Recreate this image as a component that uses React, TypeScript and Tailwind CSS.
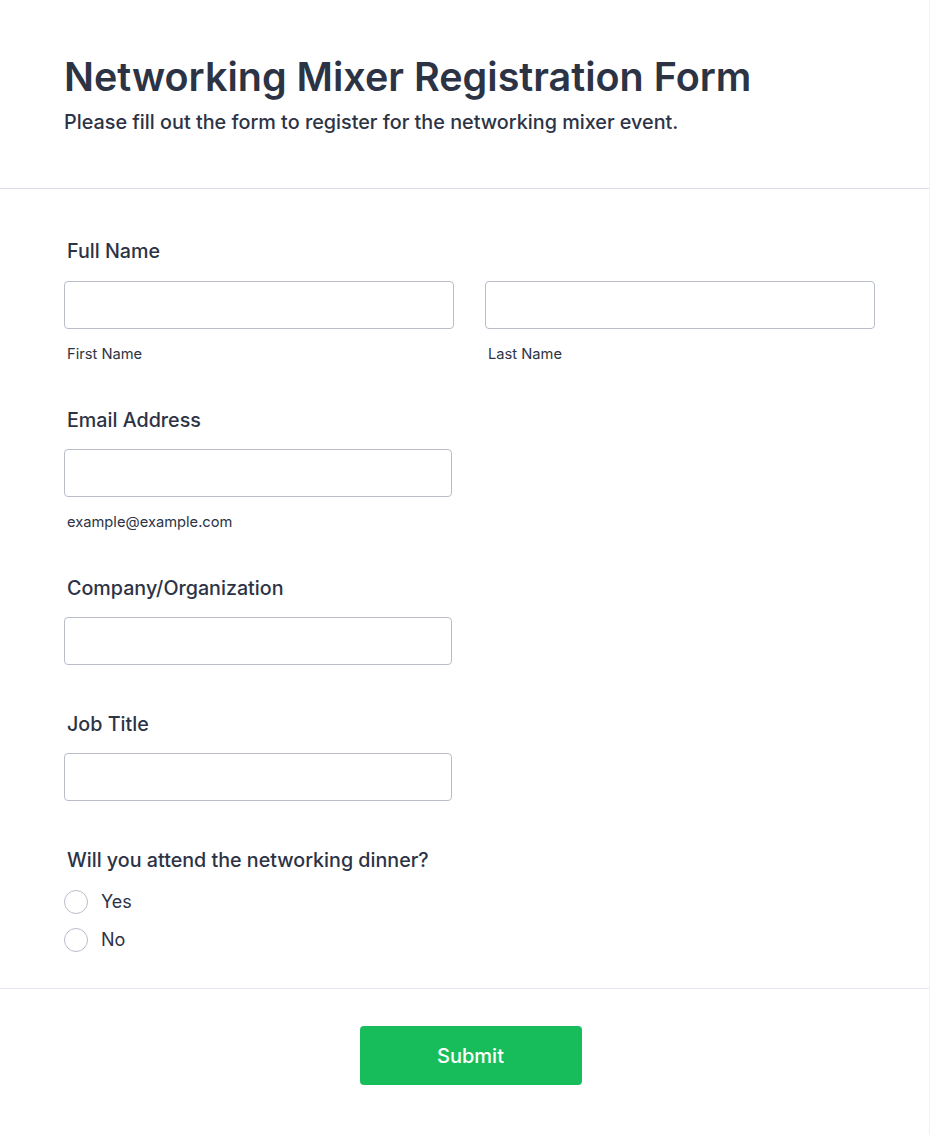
import React from 'react';

const FONT = { fontFamily: 'Inter, "Noto Sans", sans-serif' };

function Label({ children }: { children: React.ReactNode }) {
  return <div className="pl-[3px] text-[19.7px] leading-[28px] font-medium text-[#2c3345]">{children}</div>;
}

function Input({ className = '' }: { className?: string }) {
  return (
    <input
      type="text"
      className={`block h-[48px] rounded-[4px] border border-[#b8bdc9] bg-white outline-none ${className}`}
    />
  );
}

function Sub({ children }: { children: React.ReactNode }) {
  return <div className="mt-[15px] pl-[3px] text-[14.7px] leading-[20px] text-[#2c3345]">{children}</div>;
}

function Radio({ label }: { label: string }) {
  return (
    <label className="flex items-center gap-[13px]">
      <span className="w-[24px] h-[24px] rounded-full border border-[#b8bdc9] bg-white shrink-0" />
      <span className="text-[18px] leading-[24px] text-[#2c3345]">{label}</span>
    </label>
  );
}

export default function App() {
  return (
    <div className="min-h-[1135px] w-[930px] bg-white border-r border-[#f0f0f7]" style={FONT}>
      <header className="h-[189px] px-[64px] pt-[52px] border-b border-[#dcdcec]">
        <h1 className="text-[39.5px] leading-[50px] font-semibold text-[#2c3345]">
          Networking Mixer Registration Form
        </h1>
        <p className="mt-[7px] text-[19.8px] leading-[26px] font-medium text-[#2c3345]">
          Please fill out the form to register for the networking mixer event.
        </p>
      </header>

      <form className="pl-[64px] pr-[54px] pt-[48px] pb-[36px] border-b border-[#e6e6f2]">
        <Label>Full Name</Label>
        <div className="mt-[16px] flex gap-[31px]">
          <div className="w-[390px] shrink-0">
            <Input className="w-full" />
            <Sub>First Name</Sub>
          </div>
          <div className="w-[390px] shrink-0">
            <Input className="w-full" />
            <Sub>Last Name</Sub>
          </div>
        </div>

        <div className="mt-[42px]">
          <Label>Email Address</Label>
          <Input className="mt-[15px] w-[388px]" />
          <Sub>example@example.com</Sub>
        </div>

        <div className="mt-[42px]">
          <Label>Company/Organization</Label>
          <Input className="mt-[15px] w-[388px]" />
        </div>

        <div className="mt-[45px]">
          <Label>Job Title</Label>
          <Input className="mt-[15px] w-[388px]" />
        </div>

        <div className="mt-[45px]">
          <Label>Will you attend the networking dinner?</Label>
          <div className="mt-[16px] flex flex-col gap-[14px]">
            <Radio label="Yes" />
            <Radio label="No" />
          </div>
        </div>
      </form>

      <div className="flex justify-center pl-[76px] pr-[64px] pt-[37px] pb-[50px]">
        <button
          type="button"
          className="w-[222px] h-[59px] rounded-[4px] bg-[#18bd5b] text-white text-[20px] font-medium"
        >
          Submit
        </button>
      </div>
    </div>
  );
}
